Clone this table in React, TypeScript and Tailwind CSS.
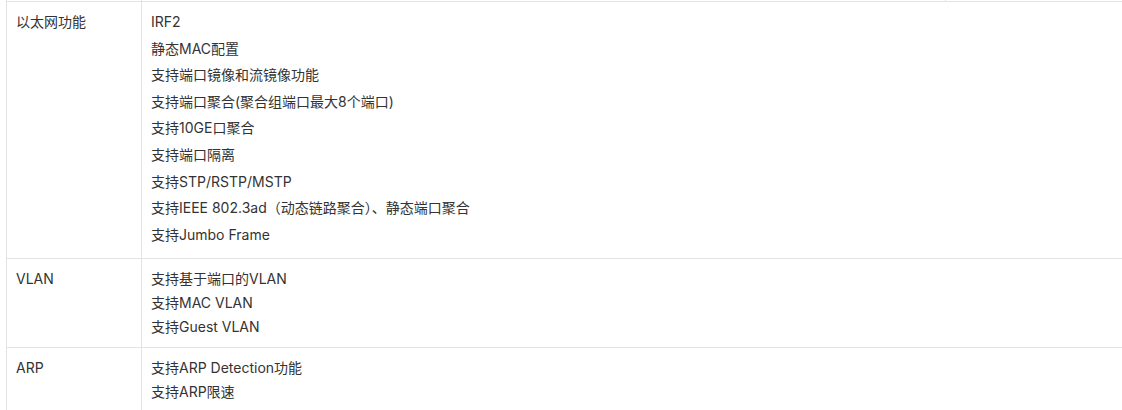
import React from "react";

const rows: { label: string; items: string[]; big: boolean }[] = [
  {
    label: "以太网功能",
    items: [
      "IRF2",
      "静态MAC配置",
      "支持端口镜像和流镜像功能",
      "支持端口聚合(聚合组端口最大8个端口)",
      "支持10GE口聚合",
      "支持端口隔离",
      "支持STP/RSTP/MSTP",
      "支持IEEE 802.3ad（动态链路聚合）、静态端口聚合",
      "支持Jumbo Frame",
    ],
    big: true,
  },
  {
    label: "VLAN",
    items: ["支持基于端口的VLAN", "支持MAC VLAN", "支持Guest VLAN"],
    big: false,
  },
  {
    label: "ARP",
    items: ["支持ARP Detection功能", "支持ARP限速"],
    big: false,
  },
];

export default function App() {
  return (
    <div
      className="w-[1122px] h-[410px] overflow-hidden bg-white text-[14px] text-[#333333]"
      style={{ fontFamily: 'Inter, "Noto Sans CJK SC", sans-serif' }}
    >
      <div className="ml-[6px] w-[1200px] border-l border-[#e3e3e3]">
        <div className="flex h-[1px]">
          <div className="w-[135px] border-r border-[#e3e3e3]" />
          <div className="w-[804px] border-r border-[#e3e3e3]" />
        </div>
        {rows.map((r) => (
          <div key={r.label} className="flex border-t border-[#e3e3e3]">
            <div className="w-[135px] shrink-0 border-r border-[#e3e3e3] pl-[9px] pt-[8px] leading-[24px]">
              {r.label}
            </div>
            <div
              className={
                r.big
                  ? "flex-1 pl-[9px] pt-[8px] pb-[9px]"
                  : "flex-1 pl-[9px] pt-[8px] pb-[8px]"
              }
            >
              {r.items.map((t) => (
                <div
                  key={t}
                  className={
                    r.big
                      ? "leading-[24px] mb-[2.6px] whitespace-nowrap"
                      : "leading-[24px] whitespace-nowrap"
                  }
                >
                  {t}
                </div>
              ))}
            </div>
          </div>
        ))}
      </div>
    </div>
  );
}
